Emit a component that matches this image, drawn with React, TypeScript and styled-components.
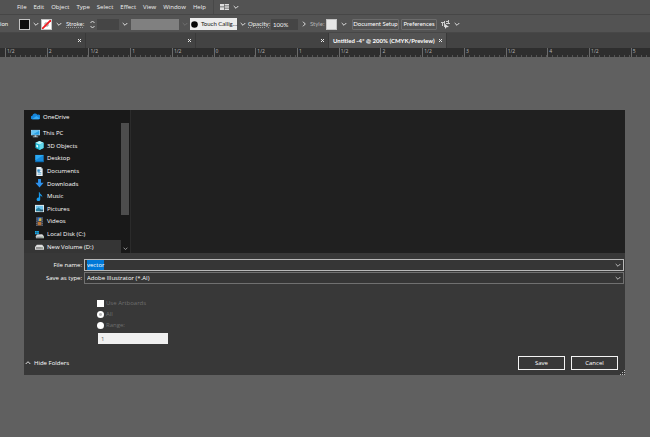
import React, { useEffect, useRef } from "react";
import styled, { createGlobalStyle, css } from "styled-components";

const Global = createGlobalStyle`
  * { box-sizing: border-box; }
  html, body, #root { height: 100%; }
  body {
    margin: 0;
    overflow: hidden;
    background: #606060;
    color: #f0f0f0;
    font: 6px/10px "Open Sans", "Noto Sans", sans-serif;
  }
  button, input, select { font: inherit; color: inherit; margin: 0; padding: 0; border: 0; background: none; border-radius: 0; }
  ul { list-style: none; margin: 0; padding: 0; }
  svg { display: block; flex: none; }
`;

const Page = styled.div`
  min-height: 100%;
  display: flex;
  flex-direction: column;
`;

const MenuBar = styled.nav`
  height: 15px;
  display: flex;
  align-items: center;
  gap: 7px;
  padding-left: 17px;
  background: #535353;
  border-bottom: 1px solid #464646;
`;

const MenuItem = styled.button`
  white-space: nowrap;
`;

const WorkspaceButton = styled.button`
  display: flex;
  align-items: center;
  gap: 4px;
  height: 14px;
  padding-left: 6px;
  border-left: 1px solid #484848;
`;

const ControlBar = styled.div`
  height: 18px;
  display: grid;
  grid-template-columns: 19px 11px 11px 11px 14px 22px 9px 22px 12px 48px 11px 47px 11px 23px 27px 12px 16px 11px 14px 49px 38px 14px 10px;
  align-items: center;
  padding-top: 1px;
  background: #535353;
  border-bottom: 1px solid #474747;
  font-family: "Lato", sans-serif;
  white-space: nowrap;
`;

const Label = styled.span<{ $dim?: boolean; $dotted?: boolean }>`
  color: ${(p) => (p.$dim ? "#b4b4b4" : "#f0f0f0")};
  ${(p) => p.$dotted && css`text-decoration: underline dotted #999; text-underline-offset: 1px;`}
`;

const Swatch = styled.button<{ $fill: string }>`
  width: 11px;
  height: 11px;
  border: 1px solid #c4c4c4;
  background: ${(p) => p.$fill};
`;

const IconButton = styled.button`
  height: 12px;
  display: grid;
  place-items: center;
`;

const DarkInput = styled.input`
  width: 100%;
  height: 11px;
  padding-left: 2px;
  background: #454545;
  color: #f4f4f4;
`;

const Profile = styled.div`
  height: 11px;
  background: #808080;
`;

const Brush = styled.button`
  height: 12px;
  display: flex;
  align-items: center;
  gap: 3px;
  padding-left: 1px;
  background: #ececec;
  color: #111;
`;

const BarButton = styled.button`
  height: 11px;
  margin: 0 1px;
  border: 1px solid #6c6c6c;
  border-radius: 1px;
  line-height: 8px;
  color: #fff;
`;

const Tabs = styled.div`
  height: 15px;
  display: flex;
  background: #434343;
`;

const Tab = styled.div<{ $width: number; $active?: boolean }>`
  width: ${(p) => p.$width}px;
  display: flex;
  align-items: center;
  justify-content: flex-end;
  padding: 0 3px 0 4px;
  border-right: 1px solid #393939;
  background: ${(p) => (p.$active ? "#535353" : "transparent")};
`;

const TabTitle = styled.button`
  flex: 1;
  text-align: left;
  white-space: nowrap;
  font-family: "Lato", sans-serif;
  font-weight: 700;
  color: #fff;
`;

const Ruler = styled.div`
  height: 9px;
  display: flex;
  overflow: hidden;
  padding-left: 5px;
  background: #2e2e2e;
`;

const RulerCell = styled.div`
  flex: 0 0 6.47%;
  height: 9px;
  padding-left: 1px;
  border-left: 1px solid #6a6a6a;
  color: #b8b8b8;
  font-size: 5px;
  line-height: 7px;
  background: repeating-linear-gradient(90deg, transparent 0 4px, #555 4px 5px) 0 100% / 100% 2px no-repeat;
`;

const Canvas = styled.main`
  flex: 1;
  padding: 53px 25px 20px 24px;
`;

const Dialog = styled.section`
  background: #383838;
  color: #fff;
`;

const Browser = styled.div`
  display: flex;
  height: 143px;
  background: #202020;
`;

const Folders = styled.nav`
  width: 97px;
  display: flex;
  flex-direction: column;
  gap: 4px;
  background: #191919;
`;

const Tree = styled.ul`
  flex: 1;
  display: grid;
  grid-auto-rows: 1fr;
`;

const Folder = styled.button<{ $depth: number; $selected?: boolean }>`
  width: 100%;
  height: 100%;
  min-height: 12px;
  display: flex;
  align-items: center;
  gap: 3px;
  padding-left: ${(p) => (p.$depth ? 11 : 7)}px;
  background: ${(p) => (p.$selected ? "#353535" : "transparent")};
  white-space: nowrap;
  text-align: left;
`;

const TopFolder = styled(Folder)`
  height: 13px;
  flex: none;
`;

const ScrollTrack = styled.div`
  width: 10px;
  display: flex;
  flex-direction: column;
  align-items: center;
  justify-content: space-between;
  padding: 13px 1px 2px 0;
  background: #191919;
  border-right: 1px solid #2b2b2b;
`;

const ScrollThumb = styled.div`
  width: 8px;
  height: 92px;
  background: #4d4d4d;
`;

const Fields = styled.div`
  display: grid;
  grid-template-columns: 58px 1fr;
  column-gap: 2px;
  row-gap: 1px;
  align-items: center;
  padding: 6px 1px 0 0;
`;

const FieldLabel = styled.label`
  text-align: right;
  white-space: nowrap;
`;

const FieldBox = styled.div<{ $focus?: boolean }>`
  height: 12px;
  display: flex;
  align-items: center;
  padding: 0 2px;
  border: 1px solid ${(p) => (p.$focus ? "#b9b9b9" : "#707070")};
  background: #363636;
`;

const NameInput = styled.input`
  flex: 1;
  min-width: 0;
  height: 10px;
  outline: 0;
  &::selection { background: #0078d7; color: #fff; }
`;

const TypeSelect = styled.select`
  flex: 1;
  min-width: 0;
  height: 10px;
  appearance: none;
  outline: 0;
`;

const Options = styled.fieldset`
  margin: 14px 0 0 73px;
  padding: 0;
  border: 0;
  display: flex;
  flex-direction: column;
  align-items: flex-start;
  gap: 1px;
  color: #6e6e6e;
`;

const Choice = styled.label`
  height: 10px;
  display: flex;
  align-items: center;
  gap: 2px;
`;

const Mark = styled.input`
  appearance: none;
  width: 7px;
  height: 7px;
  background: #fff;
  &[type="radio"] { border-radius: 50%; }
  &[type="radio"]:checked { background: radial-gradient(circle, #bbb 0 1px, #fff 2px); }
`;

const RangeInput = styled.input`
  width: 70px;
  height: 11px;
  margin-left: 1px;
  padding-left: 3px;
  margin-top: 2px;
  background: #f0f0f0;
  color: #666;
`;

const Footer = styled.footer`
  height: 31px;
  display: flex;
  align-items: center;
  gap: 6px;
  padding: 6px 0 0 1px;
`;

const HideFolders = styled.button`
  display: flex;
  align-items: center;
  gap: 3px;
  margin-right: auto;
`;

const Action = styled.button`
  width: 47px;
  height: 14px;
  border: 1px solid #f4f4f4;
  line-height: 10px;
`;

const Grip = styled.span`
  align-self: flex-end;
  margin-left: -4px;
`;

const Chevron = ({ color = "#e0e0e0", turn = 0, size = 6 }: { color?: string; turn?: number; size?: number }) => (
  <svg width={size} height={size} viewBox="0 0 6 6" fill="none" stroke={color} strokeWidth="1">
    <path d="M.7 2 3 4.3 5.3 2" transform={`rotate(${turn} 3 3)`} />
  </svg>
);

const Cross = () => (
  <svg width="5" height="5" viewBox="0 0 5 5" stroke="#e8e8e8" strokeWidth="1">
    <path d="m1 1 3 3M4 1 1 4" />
  </svg>
);

const drawings: Record<string, React.ReactNode> = {
  cloud: <><path d="M1 8a2 2 0 0 1 .5-3.9A3 3 0 0 1 7 3a2.5 2.5 0 0 1 2 5Z" fill="#1686dc" /><path d="M1.3 8 6 4.5 9.6 7A1.5 1.5 0 0 1 8.5 8Z" fill="#36a9f5" /></>,
  pc: <><path d="M0 1h10v6H0z" fill="#c3dfef" /><path d="M.6 1.6h8.8v4.8H.6z" fill="#299fe4" /><path d="m1 2 8 0-7 4H1z" fill="#65c5f5" /><path d="M4 7h2v1.3h2V9.3H2v-1h2z" fill="#b8cbd5" /></>,
  cube: <><path d="m5 0 4.5 2v5.7L5 10 .5 7.7V2z" fill="#19b6d5" /><path d="m5 0 4.5 2L5 4 .5 2z" fill="#b4f2f9" /><path d="M5 4v6l4.5-2.3V2z" fill="#65d9ed" /><path d="m1.5 4 2 1v2.5l-2-1z" fill="#e4ffff" /></>,
  desktop: <><path d="M.4 1h9.2v8H.4z" fill="#168adb" /><path d="M.4 1h9.2L.4 7z" fill="#2ba8f2" /><path d="M.4 8h9.2v1H.4z" fill="#0965aa" /></>,
  document: <><path d="M1.5 0h5l2 2v8h-7z" fill="#f0f5f8" /><path d="M6.5 0v2h2" fill="#a4b9c6" /><path d="M3 3h2v2H3zM3 6.2h4M3 8h4M5.8 3.5H7" fill="#398fc7" stroke="#398fc7" strokeWidth=".8" /></>,
  download: <path d="M3.4 0h3.2v4.2h3L5 9.4.4 4.2h3z" fill="#2d91ed" />,
  music: <path d="M5 0c0 2.5 3.5 2.6 3 6-.5-1.6-1.5-2-2.2-2.1V8A2 2 0 1 1 4.3 6.2V0z" fill="#189bed" />,
  picture: <><path d="M0 1h10v8H0z" fill="#e3ebee" /><path d="M1 2h8v6H1z" fill="#70c4ec" /><path d="m1 6 3-2 5 4H1z" fill="#287e9d" /><path d="M6 6.5 9 6v2H5z" fill="#2d5970" /></>,
  video: <><path d="M1.3 0h7.4v10H1.3z" fill="#343e50" /><path d="M3 .5h4v4H3z" fill="#3176cf" /><path d="M3 5.3h4v4H3z" fill="#ba7436" /><path d="M4.8 1.5H7v3H4z" fill="#ddb641" /><path d="M2 .7v9M8 .7v9" stroke="#b4b9c0" strokeWidth=".7" strokeDasharray="1 1" /></>,
  localDisk: <><path d="M0 1h2v1.7H0zM2.3 1h2v1.7h-2zM0 3h2v1.7H0zM2.3 3h2v1.7h-2z" fill="#18a7e7" /><path d="m2 5 6-.2L10 7v2.2H1V7z" fill="#d8d8d8" /><path d="M1.5 7.5h8v1h-8z" fill="#6b7378" /><path d="M7.5 7.6h1v.8h-1z" fill="#b5ff9c" /></>,
  disk: <><path d="M2 3h6l2 2.5V8.5H0v-3z" fill="#dedede" /><path d="M1 6h8v1.3H1z" fill="#626262" /><path d="M7.3 6.2h1V7h-1z" fill="#c3ffb4" /></>,
};

const Icon = ({ name, size = 9 }: { name: string; size?: number }) => (
  <svg width={size} height={size} viewBox="0 0 10 10">{drawings[name]}</svg>
);

const menus = ["File", "Edit", "Object", "Type", "Select", "Effect", "View", "Window", "Help"];
const ticks = ["1/2", "2", "1/2", "1", "1/2", "0", "1/2", "1", "1/2", "2", "1/2", "3", "1/2", "4", "1/2", "5"];
const folders: [string, string, number][] = [
  ["This PC", "pc", 0], ["3D Objects", "cube", 1], ["Desktop", "desktop", 1], ["Documents", "document", 1],
  ["Downloads", "download", 1], ["Music", "music", 1], ["Pictures", "picture", 1], ["Videos", "video", 1],
  ["Local Disk (C:)", "localDisk", 1], ["New Volume (D:)", "disk", 1],
];

export default function App() {
  const nameRef = useRef<HTMLInputElement>(null);
  useEffect(() => {
    nameRef.current?.focus();
    nameRef.current?.select();
  }, []);

  return (
    <Page>
      <Global />
      <MenuBar>
        {menus.map((m) => <MenuItem key={m}>{m}</MenuItem>)}
        <WorkspaceButton aria-label="Arrange documents">
          <svg width="9" height="6" viewBox="0 0 9 6" fill="#ddd"><path d="M0 0h4v2.6H0zM0 3.2h4V6H0zM4.6 0H9v1.6H4.6zM4.6 2.2H9v1.6H4.6zM4.6 4.4H9V6H4.6z" /></svg>
          <Chevron />
        </WorkspaceButton>
      </MenuBar>
      <ControlBar>
        <Label>ion</Label>
        <Swatch $fill="#0b0b0b" aria-label="Fill" />
        <IconButton aria-label="Fill options"><Chevron /></IconButton>
        <Swatch $fill="#fff" aria-label="Stroke">
          <svg width="9" height="9" viewBox="0 0 9 9"><path d="M3 3h3v3H3z" fill="none" stroke="#999" /><path d="M0 9 9 0" stroke="#f01c22" strokeWidth="1.8" /></svg>
        </Swatch>
        <IconButton aria-label="Stroke options"><Chevron /></IconButton>
        <Label as="label" htmlFor="weight" $dotted>Stroke:</Label>
        <IconButton aria-label="Step weight">
          <svg width="5" height="9" viewBox="0 0 5 9" fill="none" stroke="#ddd"><path d="m.5 3 2-2 2 2M.5 6l2 2 2-2" /></svg>
        </IconButton>
        <DarkInput id="weight" />
        <IconButton aria-label="Weights"><Chevron /></IconButton>
        <Profile />
        <IconButton aria-label="Profiles"><Chevron color="#707070" /></IconButton>
        <Brush><svg width="7" height="7" viewBox="0 0 7 7"><circle cx="3.5" cy="3.5" r="3.3" fill="#050505" /></svg>Touch Callig…</Brush>
        <IconButton aria-label="Brushes"><Chevron /></IconButton>
        <Label as="label" htmlFor="opacity" $dotted>Opacity:</Label>
        <DarkInput id="opacity" defaultValue="100%" />
        <IconButton aria-label="Opacity options"><Chevron turn={-90} /></IconButton>
        <Label $dim>Style:</Label>
        <Swatch $fill="#e6e6e6" aria-label="Style" />
        <IconButton aria-label="Styles"><Chevron /></IconButton>
        <BarButton>Document Setup</BarButton>
        <BarButton>Preferences</BarButton>
        <IconButton aria-label="Select similar">
          <svg width="9" height="9" viewBox="0 0 9 9" stroke="#ccc" fill="none"><path d="M0 2.5h3M1.5 2v4M3.5 1v6M5 1.5h3M5 3.5h4M7.5 0v4" /><path d="m4 4 4 3-2.5.2L4 9z" fill="#ddd" stroke="none" /></svg>
        </IconButton>
        <IconButton aria-label="Similar options"><Chevron /></IconButton>
      </ControlBar>
      <Tabs>
        {[86, 110, 133].map((w) => <Tab key={w} $width={w}><IconButton aria-label="Close tab"><Cross /></IconButton></Tab>)}
        <Tab $width={118} $active><TabTitle>Untitled -4* @ 200% (CMYK/Preview)</TabTitle><IconButton aria-label="Close tab"><Cross /></IconButton></Tab>
      </Tabs>
      <Ruler>{ticks.map((t, i) => <RulerCell key={i}>{t}</RulerCell>)}</Ruler>
      <Canvas>
        <Dialog role="dialog" aria-label="Save As">
          <Browser>
            <Folders>
              <TopFolder $depth={0}><Icon name="cloud" />OneDrive</TopFolder>
              <Tree>
                {folders.map(([label, icon, depth], i) => (
                  <li key={label}><Folder $depth={depth} $selected={i === 9}><Icon name={icon} />{label}</Folder></li>
                ))}
              </Tree>
            </Folders>
            <ScrollTrack><ScrollThumb /><Chevron color="#aaa" size={5} /></ScrollTrack>
          </Browser>
          <Fields>
            <FieldLabel htmlFor="name">File name:</FieldLabel>
            <FieldBox $focus><NameInput id="name" ref={nameRef} defaultValue="vector" /><Chevron color="#bbb" /></FieldBox>
            <FieldLabel htmlFor="type">Save as type:</FieldLabel>
            <FieldBox><TypeSelect id="type"><option>Adobe Illustrator (*.AI)</option></TypeSelect><Chevron color="#bbb" /></FieldBox>
          </Fields>
          <Options>
            <Choice><Mark type="checkbox" disabled />Use Artboards</Choice>
            <Choice><Mark type="radio" name="boards" defaultChecked disabled />All</Choice>
            <Choice><Mark type="radio" name="boards" disabled />Range:</Choice>
            <RangeInput aria-label="Artboard range" defaultValue="1" disabled />
          </Options>
          <Footer>
            <HideFolders><Chevron turn={180} />Hide Folders</HideFolders>
            <Action>Save</Action>
            <Action>Cancel</Action>
            <Grip><svg width="5" height="5" viewBox="0 0 5 5" fill="#bbb"><path d="M4 0h1v1H4zM2 2h1v1H2zM4 2h1v1H4zM0 4h1v1H0zM2 4h1v1H2zM4 4h1v1H4z" /></svg></Grip>
          </Footer>
        </Dialog>
      </Canvas>
    </Page>
  );
}
